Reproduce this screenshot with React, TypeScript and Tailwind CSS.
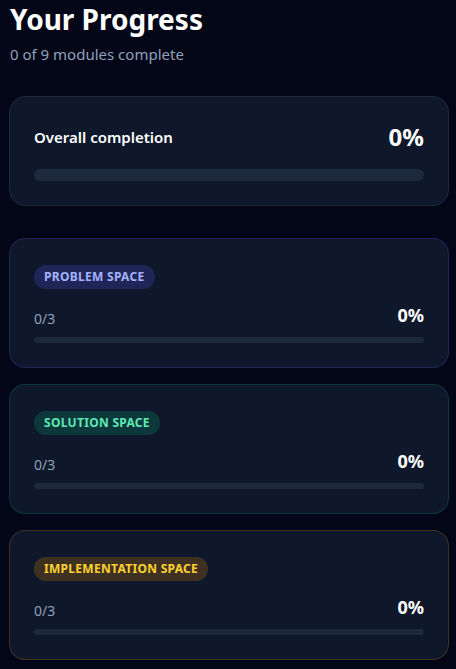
import React from "react";

const modules = [
  {
    name: "PROBLEM SPACE",
    card: "border-indigo-500/20",
    badge: "bg-indigo-500/20 text-indigo-300",
  },
  {
    name: "SOLUTION SPACE",
    card: "border-emerald-500/20",
    badge: "bg-emerald-500/20 text-emerald-300",
  },
  {
    name: "IMPLEMENTATION SPACE",
    card: "border-amber-500/20",
    badge: "bg-amber-500/20 text-amber-300",
  },
];

export default function App() {
  return (
    <div
      className="min-h-[669px] bg-[#020617] pl-[9px] pr-[7px] pt-px text-white"
      style={{ fontFamily: '"Noto Sans", "Open Sans", sans-serif' }}
    >
      <h1 className="pl-px text-[28px] font-bold leading-9">Your Progress</h1>
      <p className="mt-[7px] pl-px text-[15px] leading-5 text-slate-400">0 of 9 modules complete</p>

      <div className="mt-8 rounded-2xl border border-slate-800 bg-slate-900 p-6">
        <div className="mb-4 flex items-center justify-between">
          <span className="text-[15px] font-semibold">Overall completion</span>
          <span className="text-2xl font-bold">0%</span>
        </div>
        <div className="h-3 rounded-full bg-slate-800" />
      </div>

      <div className="mt-8 flex flex-col gap-4">
        {modules.map((m) => (
          <div key={m.name} className={`rounded-2xl border bg-slate-900 p-6 ${m.card}`}>
            <span
              className={`inline-flex h-6 items-center rounded-full px-2.5 text-xs font-bold tracking-wide ${m.badge}`}
            >
              {m.name}
            </span>
            <div className="mt-3 mb-2 flex items-end justify-between">
              <span className="text-sm text-slate-400">0/3</span>
              <span className="text-lg font-bold">0%</span>
            </div>
            <div className="h-1.5 rounded-full bg-slate-800" />
          </div>
        ))}
      </div>
    </div>
  );
}
